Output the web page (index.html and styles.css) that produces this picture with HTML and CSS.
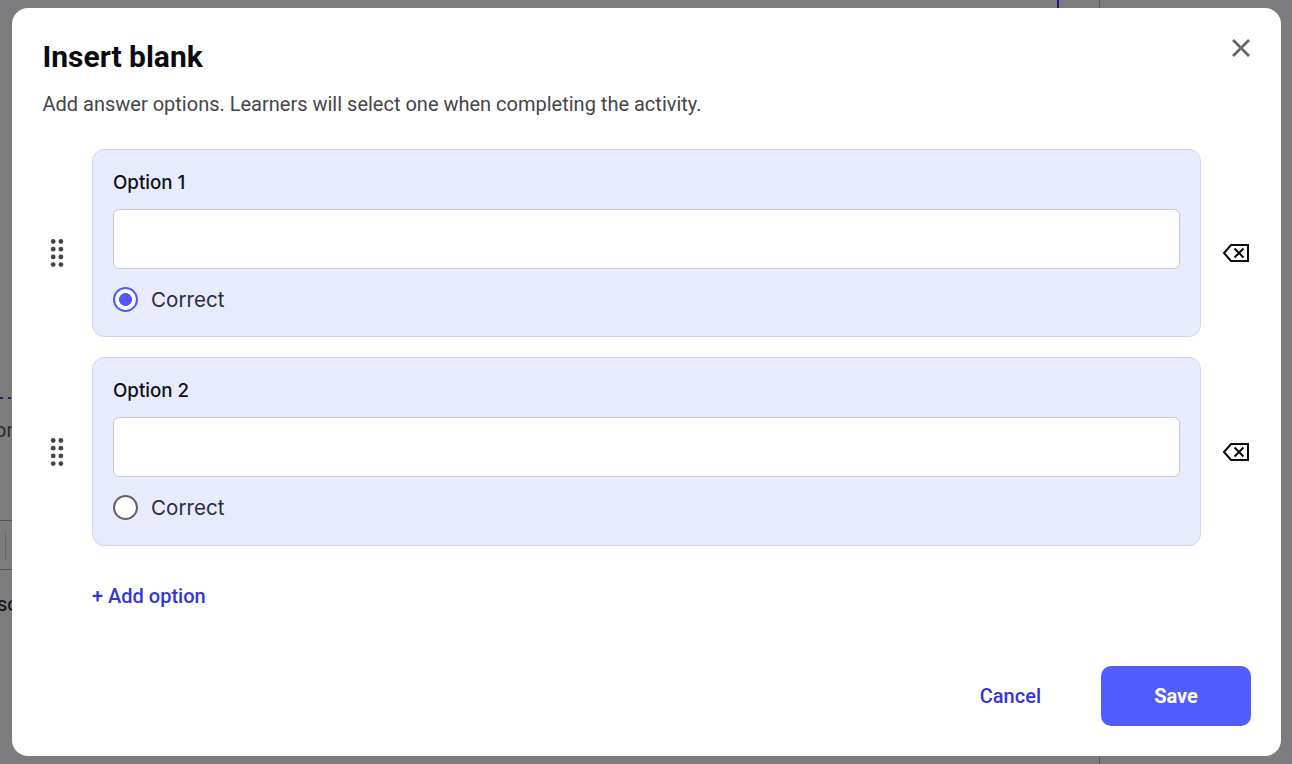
FILE: index.html
```html
<!DOCTYPE html>
<html lang="en">
<head>
<meta charset="utf-8">
<title>Insert blank</title>
<link rel="stylesheet" href="styles.css">
</head>
<body>
<div class="page" aria-hidden="true">
  <span class="bg-vline"></span>
  <span class="bg-navy"></span>
  <span class="bg-dash"></span>
  <span class="bg-text bg-on">on</span>
  <span class="bg-hline bg-h1"></span>
  <span class="bg-hline bg-h2"></span>
  <span class="bg-tool"></span>
  <span class="bg-text bg-so">so</span>
</div>
<div class="backdrop"></div>
<main class="modal">
  <button class="close" aria-label="Close">
    <svg width="20" height="20" viewBox="0 0 20 20"><path d="M2 2l16 16M18 2L2 18" fill="none" stroke="#646569" stroke-width="2.8"/></svg>
  </button>
  <h1 class="title">Insert blank</h1>
  <p class="subtitle">Add answer options. Learners will select one when completing the activity.</p>
  <div class="options">
    <div class="row">
      <svg class="grip" width="14" height="30" viewBox="0 0 14 30"><g fill="#444548"><circle cx="3.2" cy="3.5" r="2.4"/><circle cx="10.9" cy="3.5" r="2.4"/><circle cx="3.2" cy="11.2" r="2.4"/><circle cx="10.9" cy="11.2" r="2.4"/><circle cx="3.2" cy="18.9" r="2.4"/><circle cx="10.9" cy="18.9" r="2.4"/><circle cx="3.2" cy="26.6" r="2.4"/><circle cx="10.9" cy="26.6" r="2.4"/></g></svg>
      <section class="card">
        <div class="label">Option 1</div>
        <div class="input"></div>
        <div class="radio-row"><span class="radio on"></span><span class="radio-text">Correct</span></div>
      </section>
      <svg class="del" width="28" height="20" viewBox="0 0 28 20"><path d="M9 2h17v16H9L2 10z" fill="none" stroke="#0b0b0d" stroke-width="2"/><path d="M12.5 5.5l9 9M21.5 5.5l-9 9" fill="none" stroke="#0b0b0d" stroke-width="2"/></svg>
    </div>
    <div class="row">
      <svg class="grip" width="14" height="30" viewBox="0 0 14 30"><g fill="#444548"><circle cx="3.2" cy="3.5" r="2.4"/><circle cx="10.9" cy="3.5" r="2.4"/><circle cx="3.2" cy="11.2" r="2.4"/><circle cx="10.9" cy="11.2" r="2.4"/><circle cx="3.2" cy="18.9" r="2.4"/><circle cx="10.9" cy="18.9" r="2.4"/><circle cx="3.2" cy="26.6" r="2.4"/><circle cx="10.9" cy="26.6" r="2.4"/></g></svg>
      <section class="card">
        <div class="label">Option 2</div>
        <div class="input"></div>
        <div class="radio-row"><span class="radio"></span><span class="radio-text">Correct</span></div>
      </section>
      <svg class="del" width="28" height="20" viewBox="0 0 28 20"><path d="M9 2h17v16H9L2 10z" fill="none" stroke="#0b0b0d" stroke-width="2"/><path d="M12.5 5.5l9 9M21.5 5.5l-9 9" fill="none" stroke="#0b0b0d" stroke-width="2"/></svg>
    </div>
  </div>
  <a class="add">+ Add option</a>
  <footer class="actions">
    <button class="cancel">Cancel</button>
    <button class="save">Save</button>
  </footer>
</main>
</body>
</html>
```
FILE: styles.css
```css
* { box-sizing: border-box; }
html, body { margin: 0; height: 100%; overflow: hidden; }
body { font-family: Roboto, "Liberation Sans", sans-serif; background: #fff; }
.page { position: fixed; inset: 0; background: #fff; }
.bg-vline { position: absolute; left: 1099px; top: 0; bottom: 0; width: 1px; background: #b8b8ba; }
.bg-navy { position: absolute; left: 1057px; top: 0; width: 2px; height: 8px; background: #3030ff; }
.bg-dash { position: absolute; left: 0; top: 397px; width: 12px; height: 2px; background: repeating-linear-gradient(90deg, #3a3af0 0 3px, transparent 3px 8px); }
.bg-text { position: absolute; font-size: 20px; line-height: 20px; }
.bg-on { top: 420px; left: -5px; color: #555; }
.bg-so { top: 594px; left: -3px; color: #111; }
.bg-hline { position: absolute; left: 0; width: 12px; height: 1px; background: #a8a8a8; }
.bg-h1 { top: 520px; }
.bg-h2 { top: 569px; }
.bg-tool { position: absolute; left: 5px; top: 530px; width: 1px; height: 30px; background: #d4d4d4; }
.backdrop { position: fixed; inset: 0; background: rgba(8, 8, 12, 0.53); }
.modal { position: absolute; left: 12px; top: 8px; width: 1269px; height: 748px; background: #fff; border-radius: 16px; padding: 29px 30px 30px; display: flex; flex-direction: column; }
.close { position: absolute; right: 30px; top: 30px; width: 20px; height: 20px; padding: 0; border: 0; background: none; display: flex; }
.title { margin: 0 0 0 0.5px; font-size: 30px; line-height: 40px; font-weight: 700; color: #0b0b0f; }
.subtitle { margin: 13px 0 0 0.5px; font-size: 20px; line-height: 28px; color: #444548; }
.options { margin-top: 30.6px; display: flex; flex-direction: column; }
.row { display: flex; align-items: center; }
.grip { margin: 1px 28px 0 8px; flex: none; }
.card { width: 1109px; background: #e8ebfd; border: 1px solid #ccd5f5; border-radius: 12px; padding: 20px; flex: none; margin-bottom: 20px; }
.row:last-child .card { margin-bottom: 0; }
.label { font-family: Inter, Roboto, sans-serif; font-size: 18.72px; line-height: 25px; font-weight: 500; color: #0e1018; }
.input { margin-top: 14px; height: 60px; background: #fff; border: 1px solid #c6c8d0; border-radius: 6px; }
.radio-row { margin-top: 14px; display: flex; align-items: center; gap: 13px; height: 33.5px; }
.radio { width: 25px; height: 25px; border-radius: 50%; border: 2px solid #606166; background: #fff; flex: none; }
.radio.on { border-color: #5058fb; background: radial-gradient(circle, #5058fb 0 6.2px, #fff 6.7px); }
.radio-text { font-family: Inter, Roboto, sans-serif; font-size: 20.6px; color: #2a2c3a; }
.del { margin: 1px 0 0 21px; flex: none; }
.add { margin-top: 36px; margin-left: 50px; font-size: 20px; line-height: 28px; font-weight: 500; color: #3236d8; }
.actions { margin-top: auto; display: flex; justify-content: flex-end; align-items: center; }
.cancel { border: 0; background: none; padding: 0; font: 500 20px Roboto, sans-serif; color: #3236d8; margin-right: 60px; }
.save { width: 150px; height: 60px; border: 0; border-radius: 10px; background: #525cfd; color: #fff; font: 700 20px Roboto, sans-serif; }
```
